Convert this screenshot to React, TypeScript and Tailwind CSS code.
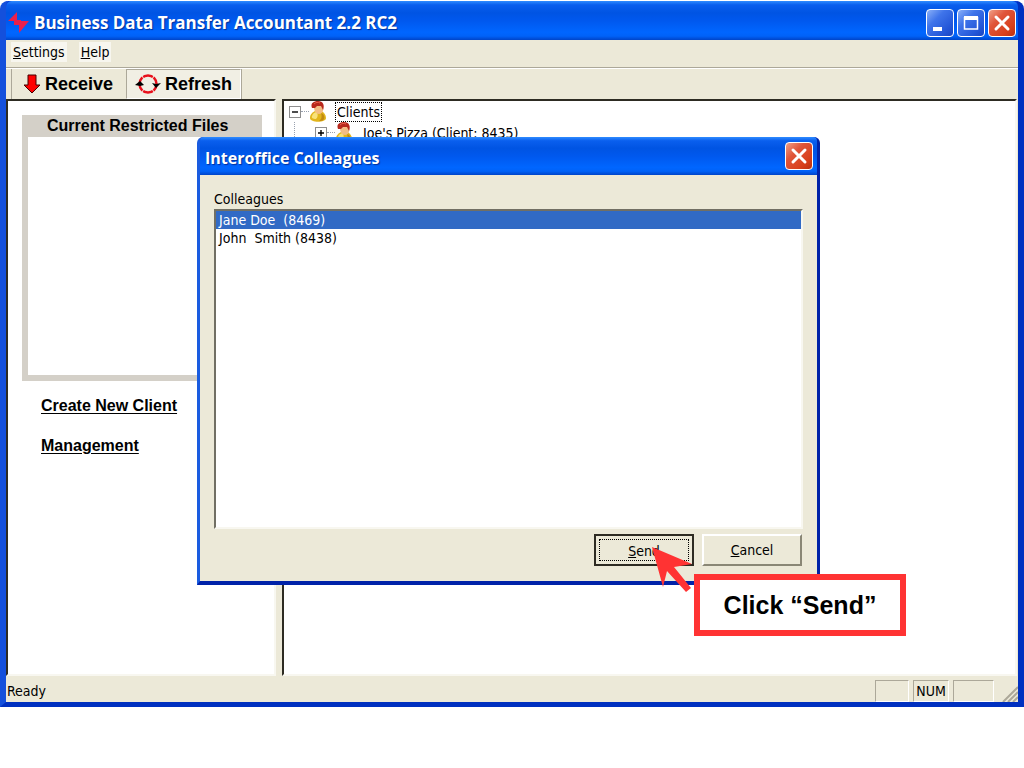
import { useState, type ReactNode } from 'react';

interface Colleague {
  id: number;
  label: string;
}

const colleagues: Colleague[] = [
  { id: 8469, label: 'Jane Doe  (8469)' },
  { id: 8438, label: 'John  Smith (8438)' },
];

const titleBar =
  'bg-[linear-gradient(to_bottom,#2f8cff_0%,#0a5fee_10%,#0054e3_30%,#0058ee_50%,#0066ff_80%,#0062f8_90%,#0044c8_100%)]';

// Xp style caption button
const CaptionButton = ({ label, danger = false, children }: { label: string; danger?: boolean; children: ReactNode }) => (
  <button
    type="button"
    aria-label={label}
    className={
      danger
        ? 'h-7 w-7 rounded border border-white bg-[linear-gradient(135deg,#f0a088_0%,#e0553a_35%,#d8401c_75%,#b83010_100%)]'
        : 'h-7 w-7 rounded border border-white bg-[linear-gradient(135deg,#8ab0f8_0%,#3f74ea_35%,#2457d8_75%,#1a44c0_100%)]'
    }
  >
    <svg viewBox="0 0 26 26" className="h-full w-full" fill="none" stroke="#fff" strokeWidth="3">
      {children}
    </svg>
  </button>
);

const CloseMark = () => <path d="M7 7l12 12M19 7L7 19" strokeLinecap="round" />;

const ClientIcon = () => (
  <svg viewBox="0 0 18 22" className="h-[22px] w-[18px] shrink-0">
    <path d="M1 17c0-4 3-6 5-7h6c3 1 5 4 5 7 0 5-16 5-16 0z" fill="#e2b51c" />
    <path d="M3 15c1-3 3-4 5-4 1 3 1 5-1 7-3 0-5-1-4-3z" fill="#f8e27a" />
    <path d="M12 12c3 1 4 4 3 6-1 2-3 2-5 2 3-2 3-5 2-8z" fill="#c08a10" />
    <path d="M5 6c0-2 9-3 9 0 1 4-1 7-4 7S5 10 5 6z" fill="#f3bd84" />
    <path d="M3 7C1 2 5 0 9 0c5 0 7 4 5 9l-2-4-4 0-2 2z" fill="#b8281c" />
    <path d="M5 3c2-2 4-2 6-1" stroke="#e8604a" fill="none" />
  </svg>
);

const Expander = ({ open = false }: { open?: boolean }) => (
  <button
    type="button"
    aria-label={open ? 'Collapse' : 'Expand'}
    className="h-3 w-3 shrink-0 border border-[#8e8e8e] bg-white"
  >
    <svg viewBox="0 0 10 10" className="h-full w-full" stroke="#000" strokeWidth="1.400">
      <path d={open ? 'M2 5h6' : 'M2 5h6M5 2v6'} />
    </svg>
  </button>
);

// Colleague picker shown over the main window
const ColleaguesDialog = () => {
  const [selected, setSelected] = useState(8469);

  return (
    <div
      role="dialog"
      aria-labelledby="dialog-title"
      className="absolute top-[137px] left-[197px] flex w-[623px] flex-col rounded-t-md border-x-[3px] border-b-4 border-r-[#0022a8] border-b-[#0022a8] border-l-[#1a5ce0] bg-[#0a3fd0]"
    >
      <div className={`flex h-[38px] items-center justify-between rounded-t pr-1 pl-[5px] ${titleBar}`}>
        <h2
          id="dialog-title"
          className="pt-1 font-['Open_Sans',sans-serif] text-[16px] font-bold text-white [text-shadow:1px_1px_1px_#00309c]"
        >
          Interoffice Colleagues
        </h2>
        <CaptionButton label="Close" danger>
          <CloseMark />
        </CaptionButton>
      </div>
      <div className="flex flex-col bg-[#ece9d8] px-[14px] pt-[14px] pb-[15px]">
        <span id="list-label" className="leading-5">
          Colleagues
        </span>
        <ul
          role="listbox"
          aria-labelledby="list-label"
          className="h-[320px] border-2 border-t-[#716f64] border-r-[#f8f7f0] border-b-[#f8f7f0] border-l-[#716f64] bg-white"
        >
          {colleagues.map((colleague) => (
            <li
              key={colleague.id}
              role="option"
              aria-selected={colleague.id === selected}
              onClick={() => setSelected(colleague.id)}
              className={`h-[18px] cursor-default pl-[3px] leading-[19px] whitespace-pre ${
                colleague.id === selected ? 'bg-[#316ac5] text-white' : ''
              }`}
            >
              {colleague.label}
            </li>
          ))}
        </ul>
        <div className="mt-[5px] flex justify-end gap-2 pr-px">
          <button type="button" className="h-8 w-[100px] border-2 border-[#2d2b22] bg-[#ece9d8] p-[3px]">
            <span className="block h-full border border-dotted border-black leading-[22px]">
              <u>S</u>end
            </span>
          </button>
          <button
            type="button"
            className="h-8 w-[100px] border-2 border-t-white border-r-[#8a8776] border-b-[#8a8776] border-l-white bg-[#ece9d8]"
          >
            <u>C</u>ancel
          </button>
        </div>
      </div>
    </div>
  );
};

const App = () => {
  return (
    <div className="relative flex min-h-screen flex-col bg-white pt-px pb-[61px] font-['DejaVu_Sans_Condensed','DejaVu_Sans',sans-serif] text-[14px] text-black">
      {/* Main window */}
      <div className="flex flex-1 flex-col rounded-t-lg border-x-[6px] border-b-[5px] border-r-[#0030c0] border-b-[#0030c0] border-l-[#1450dc] bg-[#0a3fd8]">
        <header className={`flex h-[39px] items-center justify-between rounded-t-md pt-1 ${titleBar}`}>
          <div className="flex items-center gap-1">
            <svg viewBox="0 0 24 22" className="h-[22px] w-6" fill="#e8204c">
              <path d="M2 9L11 0v13H8V9z" />
              <path d="M12 9h11L13 21V9z" />
              <path d="M8 8h7v5H8z" />
            </svg>
            <h1 className="font-['Open_Sans',sans-serif] text-[17px] font-bold text-white [text-shadow:1px_1px_1px_#00309c]">
              Business Data Transfer Accountant 2.2 RC2
            </h1>
          </div>
          <div className="flex gap-[3px] pr-0.5">
            <CaptionButton label="Minimize">
              <path d="M6 19h9" strokeWidth="4" />
            </CaptionButton>
            <CaptionButton label="Maximize">
              <path d="M6 8h14" strokeWidth="4" />
              <path d="M6.500 7v12h13V7" strokeWidth="1.500" />
            </CaptionButton>
            <CaptionButton label="Close" danger>
              <CloseMark />
            </CaptionButton>
          </div>
        </header>

        {/* Menu */}
        <nav className="flex h-7 items-start gap-3 border-b border-[#aca899] bg-[#ece9d8] pt-0.5 pl-[5px]">
          <button type="button" className="bg-white/60 px-0.5 leading-5">
            <u>S</u>ettings
          </button>
          <button type="button" className="bg-white/60 px-0.5 leading-5">
            <u>H</u>elp
          </button>
        </nav>

        {/* Toolbar */}
        <div className="flex h-[31px] border-t border-white bg-[#ece9d8] pl-[5px] font-['Liberation_Sans',Arial,sans-serif] text-[18px] font-bold">
          <button type="button" className="flex items-center gap-1 border-l border-[#aca899] pr-[13px] pl-[11px]">
            <svg viewBox="0 0 18 20" className="h-5 w-[18px]">
              <path d="M5 1h8v10h4l-8 8-8-8h4z" fill="#f00" stroke="#400" />
            </svg>
            Receive
          </button>
          <button type="button" className="flex items-center gap-1 border border-t-[#aca899] border-r-white border-b-white border-l-[#aca899] bg-[#f1efe4] px-2">
            <svg viewBox="0 0 26 20" className="h-5 w-[26px]" fill="none">
              <circle cx="13" cy="10" r="8.500" stroke="#e8101c" strokeWidth="2.500" />
              <path d="M7 2l2 3M19 2l-2 3M7 18l2-3M19 18l-2-3" stroke="#f1efe4" />
              <path d="M0 11l5-4 4 4-4 1zM17 9l4 1 5-1-5 5z" fill="#000" />
            </svg>
            Refresh
          </button>
          <span className="border-r border-[#aca899]" />
        </div>

        {/* Panes */}
        <main className="flex flex-1 gap-1.5 bg-[#ece9d8] pr-px">
          <section className="w-[270px] shrink-0 border-2 border-t-[#2d2b22] border-r-[#f8f7f0] border-b-[#f8f7f0] border-l-[#2d2b22] bg-white pt-[14px] pr-3 pl-[14px] font-['Liberation_Sans',Arial,sans-serif] text-[16px] font-bold">
            <div className="border-6 border-t-0 border-[#d4d0c8] bg-white">
              <h2 className="h-[22px] bg-[#d4d0c8] pl-[19px] leading-[21px] whitespace-nowrap">Current Restricted Files</h2>
              <div className="h-[238px]" />
            </div>
            <div className="mt-[15px] flex flex-col items-start gap-5 pl-[19px]">
              <a href="#create" className="leading-5 underline underline-offset-2">
                Create New Client
              </a>
              <a href="#management" className="leading-5 underline underline-offset-2">
                Management
              </a>
            </div>
          </section>

          <section className="flex-1 border-2 border-t-[#2d2b22] border-r-[#f8f7f0] border-b-[#f8f7f0] border-l-[#2d2b22] bg-white pl-[5px]">
            <div className="flex h-[21px] items-center">
              <Expander open />
              <span className="w-2 border-t border-dotted border-gray-400" />
              <ClientIcon />
              <span className="ml-2 border border-dotted border-black px-px leading-[18px]">Clients</span>
            </div>
            <div className="ml-[5px] flex h-[21px] items-center border-l border-dotted border-gray-400 pl-5">
              <Expander />
              <span className="w-2 border-t border-dotted border-gray-400" />
              <ClientIcon />
              <span className="ml-[10px] leading-5">Joe's Pizza (Client: 8435)</span>
            </div>
          </section>
        </main>

        {/* Status bar */}
        <footer className="flex h-[26px] items-stretch bg-[#ece9d8] pt-1">
          <span className="flex-1 pl-px leading-[22px]">Ready</span>
          <div className="flex gap-1">
            <span className="w-[34px] border border-t-[#aca899] border-r-white border-b-white border-l-[#aca899]" />
            <span className="w-[36px] border border-t-[#aca899] border-r-white border-b-white border-l-[#aca899] text-center leading-5">
              NUM
            </span>
            <span className="w-[41px] border border-t-[#aca899] border-r-white border-b-white border-l-[#aca899]" />
          </div>
          <svg viewBox="0 0 16 16" className="ml-2 h-4 w-4 self-end" stroke="#aca899" strokeWidth="2">
            <path d="M1 16L16 1M6 16L16 6M11 16l5-5" />
          </svg>
        </footer>
      </div>

      <ColleaguesDialog />

      {/* Callout with its pointer */}
      <svg viewBox="0 0 40 46" className="absolute top-[547px] left-[652px] h-[46px] w-10" fill="#ff3333">
        <path d="M0 0l40 17-18 3 17 21-5 4-19-21-4 16z" />
      </svg>
      <div className="absolute top-[574px] left-[694px] flex h-[62px] w-[212px] items-center justify-center border-6 border-[#ff3333] bg-white pt-0.5 font-['Liberation_Sans',Arial,sans-serif] text-[25px] font-bold">
        Click “Send”
      </div>
    </div>
  );
};

export default App;
